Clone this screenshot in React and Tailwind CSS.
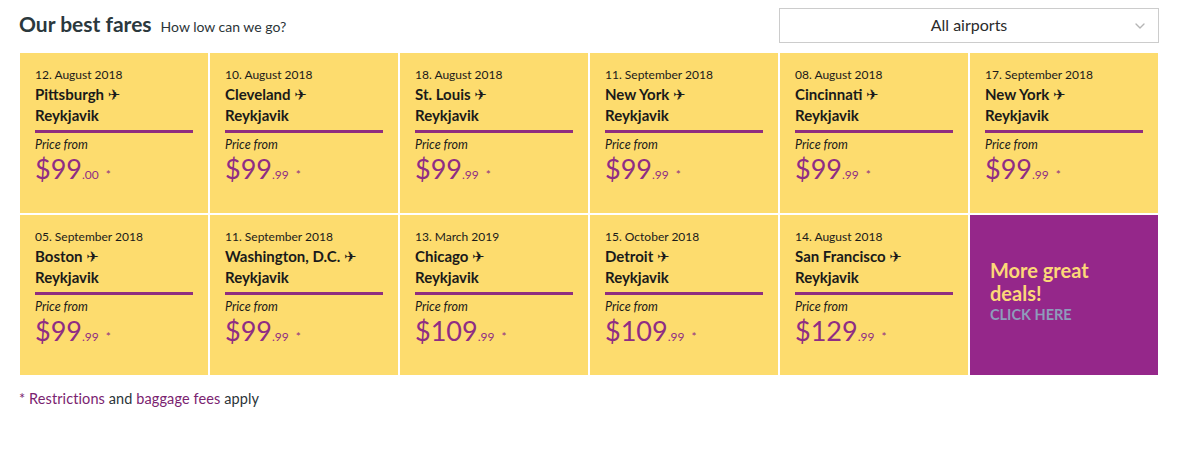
import { ChevronDown } from "lucide-react"

const fares = [
    { date: "12. August 2018", from: "Pittsburgh", price: "99", cents: "00" },
    { date: "10. August 2018", from: "Cleveland", price: "99", cents: "99" },
    { date: "18. August 2018", from: "St. Louis", price: "99", cents: "99" },
    { date: "11. September 2018", from: "New York", price: "99", cents: "99" },
    { date: "08. August 2018", from: "Cincinnati", price: "99", cents: "99" },
    { date: "17. September 2018", from: "New York", price: "99", cents: "99" },
    { date: "05. September 2018", from: "Boston", price: "99", cents: "99" },
    { date: "11. September 2018", from: "Washington, D.C.", price: "99", cents: "99" },
    { date: "13. March 2019", from: "Chicago", price: "109", cents: "99" },
    { date: "15. October 2018", from: "Detroit", price: "109", cents: "99" },
    { date: "14. August 2018", from: "San Francisco", price: "129", cents: "99" },
]

function FareCard({ date, from, price, cents }) {
    return (
        <div className="h-[160px] bg-[#fddc6e] px-[15px] pt-[14px] text-[#1a1a1a]">
            <p className="text-[12px] leading-[16px]">{date}</p>
            <p className="text-[15px] font-bold leading-[20px] mt-[1px]">
                {from} <span className="font-['DejaVu_Sans'] text-[15px] font-normal">✈</span>
            </p>
            <p className="text-[15px] font-bold leading-[20px]">Reykjavik</p>
            <div className="h-[3px] bg-[#8f2d7f] mt-[5px]" />
            <p className="text-[12.5px] italic leading-[16px] mt-[4px]">Price from</p>
            <p className="text-[#8f2d84] flex items-baseline">
                <span className="text-[27px] leading-[32px]">${price}</span>
                <span className="text-[12px]">.{cents}</span>
                <span className="text-[12px] ml-[7px]">*</span>
            </p>
        </div>
    )
}

export default function App() {
    return (
        <div className="w-[1201px] h-[456px] bg-white font-['Lato','Liberation_Sans',sans-serif] text-[#2b3438]">
            {/* Header */}
            <div className="flex items-center justify-between pl-[19px] pr-[42px] pt-[8px] h-[43px]">
                <div className="flex items-baseline gap-[9px] -mt-[4px]">
                    <h2 className="text-[21px] font-bold text-[#2b383d]">Our best fares</h2>
                    <span className="text-[14px] text-[#2b3438]">How low can we go?</span>
                </div>
                <div className="relative w-[380px] h-[35px] border border-[#cccccc] flex items-center justify-center text-[16px] text-[#2b2b2b] pb-[1px]">
                    All airports
                    <ChevronDown className="absolute right-[10px] top-[9px] w-[16px] h-[16px] text-[#b5b5b5]" strokeWidth={2} />
                </div>
            </div>

            {/* Grid */}
            <div className="grid grid-cols-6 gap-[2px] mt-[10px] ml-[20px] w-[1138px]">
                {fares.map((f, i) => <FareCard key={i} {...f} />)}
                <div className="h-[160px] bg-[#95278a] px-[20px] flex flex-col justify-center pb-[8px]">
                    <p className="text-[20px] font-bold leading-[23px] text-[#fcd878]">More great<br />deals!</p>
                    <p className="text-[14.5px] font-bold text-[#8e9cbb] leading-[18px] mt-[1px]">CLICK HERE</p>
                </div>
            </div>

            {/* Footer */}
            <p className="ml-[19px] mt-[13px] text-[14.5px] tracking-[0.1px]">
                <span className="text-[#7a2370]">* Restrictions</span> and{" "}
                <span className="text-[#7a2370]">baggage fees</span> apply
            </p>
        </div>
    )
}
